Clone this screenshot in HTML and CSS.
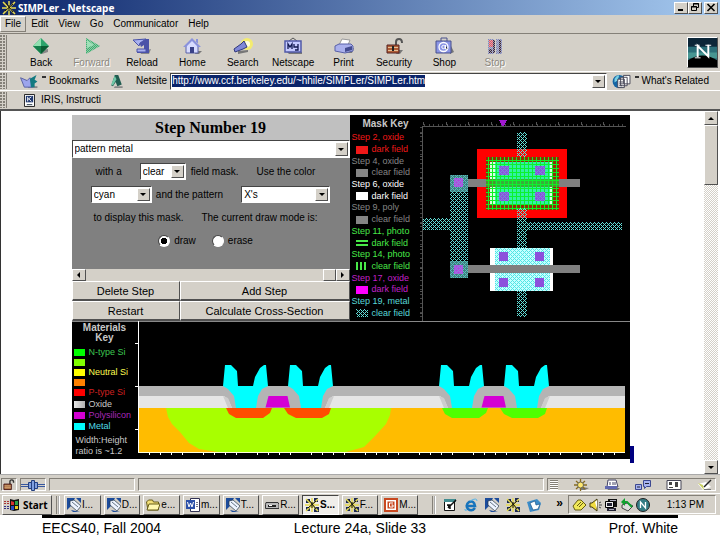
FILE: index.html
```
<!DOCTYPE html>
<html lang="en">
<head>
<meta charset="utf-8">
<title>SIMPLer - Netscape</title>
<link rel="stylesheet" href="styles.css">
</head>
<body>
<svg class="defs" width="0" height="0" aria-hidden="true">
  <defs>
    <pattern id="hatch" width="4" height="4" patternUnits="userSpaceOnUse"><path fill="#62e0da" shape-rendering="crispEdges" d="M0 0h1v1H0zM1 1h1v1H1zM2 2h1v1H2zM3 3h1v1H3zM3 1h1v1H3zM1 3h1v1H1z"/></pattern>
    <pattern id="hatch-light" width="4" height="4" patternUnits="userSpaceOnUse"><path fill="#52e4e4" shape-rendering="crispEdges" d="M0 0h1v1H0zM1 1h1v1H1zM2 2h1v1H2zM3 3h1v1H3zM3 1h1v1H3zM1 3h1v1H1z"/></pattern>
    <pattern id="grid" width="4" height="4" patternUnits="userSpaceOnUse"><path fill="#10f020" shape-rendering="crispEdges" d="M0 0h4v1H0zM0 0h1v4H0z"/></pattern>
    <pattern id="dots" width="2" height="2" patternUnits="userSpaceOnUse"><path fill="#d4d0c8" shape-rendering="crispEdges" d="M0 0h1v1H0zM1 1h1v1H1z"/></pattern>
    <symbol id="chip" viewBox="0 0 14 14"><path fill="#1c2850" d="M1 1h4v4H1zM9 0h4v4H9zM1 9h4v4H1zM9 9h5v5H9z"/><path stroke="#e8dc50" stroke-width="1.5" d="M1 1l12 12M13 1L1 13M7 0v14M0 7h14"/><path stroke="#111" d="M4 2l7 9M3 10l8-7M7 4v6"/></symbol>
    <symbol id="telnet" viewBox="0 0 14 14"><path fill="#1c4c9c" d="M0 0h8L4 8 0 12zM9 0h5v5zM4 12l9 2H6z"/><path fill="#eef4ff" stroke="#234" stroke-width=".7" d="M3 3l4-1 7 6-4 5-7-6z"/><path stroke="#456" stroke-width=".8" d="M5 4l6 5"/></symbol>
    <symbol id="monitor" viewBox="0 0 14 14"><path fill="#111" d="M4 1h9v8H4z"/><path fill="#eee" stroke="#000" d="M1.500 3.500h8v6h-8z"/><path fill="#223" d="M3 5h5v3H3zM3 10h9v3H3z"/><path fill="#aab" d="M6 2h6v1H6zM5 11h5v1H5z"/></symbol>
  </defs>
</svg>

<main class="desktop">
  <header class="titlebar">
    <svg class="i14"><use href="#chip"/></svg>
    <h1>SIMPLer - Netscape</h1>
    <div class="winbtns">
      <button class="bevel" aria-label="Minimize"><svg viewBox="0 0 12 9"><path d="M3 6h5v2H3z"/></svg></button>
      <button class="bevel" aria-label="Restore"><svg viewBox="0 0 12 9"><path fill="none" stroke="#000" d="M4.500 3V.5h5v4H8M2.500 3.500h5v4h-5zM4 1h6M2 4h6"/></svg></button>
      <button class="bevel apart" aria-label="Close"><svg viewBox="0 0 12 9"><path stroke="#000" stroke-width="1.600" d="M2.500 1l7 7M9.500 1l-7 7"/></svg></button>
    </div>
  </header>

  <nav class="menu">
    <button class="open">File</button><button>Edit</button><button>View</button><button>Go</button><button>Communicator</button><button>Help</button>
  </nav>

  <div class="bar tools">
    <span class="grip"></span>
    <div class="toolset">
      <button class="tool"><svg viewBox="0 0 20 18"><path fill="#888" d="M9 13l8-1v3l-6 2z"/><path fill="#2da46c" d="M10 1l8 8-8 8-8-8z"/><path fill="#0c5c34" d="M10 9h8l-8 8z"/><path fill="#8fe0b0" d="M2 9l8-8v8z"/><path fill="#13804b" d="M2 9h8v8z"/></svg>Back</button>
      <button class="tool off"><svg viewBox="0 0 20 18"><path fill="#37b371" d="M4 1l14 8-14 8z"/><path fill="url(#dots)" d="M4 1l14 8-14 8z" opacity=".6"/><path fill="#9fe0b8" d="M5 3l7 5-7 3z"/></svg>Forward</button>
      <button class="tool"><svg viewBox="0 0 20 18"><path fill="#888" d="M8 15l11-3-2 5H9z"/><path fill="#4a52a8" d="M6 2h11v14H5v-4h7V8L9 10z"/><path fill="#aab2f0" stroke="#4a52a8" d="M1 3l6 6 1-3 6-4zM5 12h9v3H5z"/></svg>Reload</button>
      <button class="tool"><svg viewBox="0 0 20 18"><path fill="#777" d="M14 14h6l-3 3h-4z"/><path fill="#d8dcff" stroke="#5a62a8" d="M4 8l6-6 6 6v8H4z"/><path fill="#8a92dc" d="M10 1L1 10h3l6-6 6 6h3zM14 2h2v4h-2z"/><path fill="#3a4288" d="M8 10h4v6H8z"/></svg>Home</button>
      <button class="tool"><svg viewBox="0 0 20 18"><circle cx="14" cy="7" r="6" fill="#f4ec70"/><circle cx="14" cy="7" r="3" fill="#fffde0"/><path fill="#777" d="M5 14l10-1v2L5 17z"/><path fill="#8088d8" stroke="#30387c" d="M1 12l7-5 3-3 3 6-4 2-8 3z"/></svg>Search</button>
      <button class="tool"><svg viewBox="0 0 20 18"><path fill="none" stroke="#555" d="M6 4l4-3 4 3"/><path fill="#777" d="M4 15h15v2H6z"/><path fill="#c4caff" stroke="#505aa8" stroke-width="1.500" d="M2 4h16v11H2z"/><path fill="none" stroke="#101850" stroke-width="1.300" d="M5 12V7l2 3 2-3v5M11 7v3h4M15 7v6h-3"/></svg>Netscape</button>
      <button class="tool"><svg viewBox="0 0 20 18"><path fill="#777" d="M9 14l11-3-2 5h-7z"/><path fill="#fff" stroke="#999" d="M5 8l3-6 8 1-2 5z"/><path fill="#aab0ec" stroke="#5860a8" d="M1 9l4-2h12l2 2v5l-8 2-10-2z"/><path fill="#444c90" d="M11 11l7-2v4l-7 2z"/></svg>Print</button>
      <button class="tool"><svg viewBox="0 0 20 18"><path fill="#777" d="M14 13h5l-3 4h-4z"/><path fill="none" stroke="#555" stroke-width="2" d="M12 9V5q0-3 3-3t3 4"/><path fill="#b05c34" stroke="#522" d="M3 8h12v8H3z"/><path stroke="#e4c098" d="M4 10.500h10M4 13.500h10"/><path fill="#222" d="M8 9h2v5H8z"/></svg>Security</button>
      <button class="tool"><svg viewBox="0 0 20 18"><path fill="#777" d="M16 7l4 8-4 2z"/><path fill="none" stroke="#48508c" d="M7 4V1h6v3"/><path fill="#8a94e4" stroke="#48508c" d="M2 4h15v12H2z"/><circle cx="9.500" cy="10" r="4.500" fill="none" stroke="#fff" stroke-width="1.300"/><circle cx="9.500" cy="10" r="1.700" fill="none" stroke="#fff"/><path stroke="#fff" d="M11.500 8v4h2"/></svg>Shop</button>
      <button class="tool off"><svg viewBox="0 0 20 18"><path fill="#8088c0" d="M3 2h6v15H3zM11 2h6v15h-6z"/><path fill="#e05068" d="M4 3h5v7H4z"/><path fill="#324" d="M8 3h2v13H8zM14 3h2v13h-2zM4 12h3v4H4z"/><path fill="url(#dots)" d="M2 1h16v17H2z" opacity=".7"/></svg>Stop</button>
    </div>
    <svg class="nlogo bevel" viewBox="0 0 30 30"><path fill="#0c2638" d="M0 0h30v30H0z"/><path fill="#2b6e78" d="M0 9h30v14H0z"/><path fill="#5ab0a4" d="M0 15h30v6H0z" opacity=".6"/><path fill="#000" d="M0 23q15-10 30 0v7H0z"/><path fill="none" stroke="#fff" stroke-width="2" d="M10 20V8l11 11V7"/><path stroke="#fff" d="M7 7.500h5M18 7.500h6M7 20.500h6"/></svg>
  </div>

  <div class="bar location">
    <span class="grip"></span>
    <a class="quick marks" href="#bookmarks"><svg viewBox="0 0 20 16"><path fill="#888" d="M9 13h10v2H9z"/><path fill="#9ca4ec" stroke="#5860a0" d="M1 4l7 3 3-3 3 10H5z"/><path fill="#137a80" d="M11 5l7-4-2 5 3 2-3 2v4h-4z"/></svg><i class="tick"></i>Bookmarks</a>
    <svg class="netsite" viewBox="0 0 14 16"><path fill="#888" d="M5 14h9v2H4z"/><path fill="#205c50" d="M5 1h4l4 11-5 2-2-5-3 5-2-1z"/><path fill="#70c8a8" d="M5 2l2 4-4 7-2-1z"/></svg>
    <label for="url">Netsite</label>
    <div class="urlbox">
      <input id="url" type="text" value="http://www.ccf.berkeley.edu/~hhile/SIMPLer/SIMPLer.htm">
      <button class="bevel arrow" aria-label="History"></button>
    </div>
    <a class="quick related" href="#related"><svg viewBox="0 0 20 16"><circle cx="7" cy="8" r="7" fill="#1666a4"/><path fill="#78d0e4" d="M2 5q4-5 5-3L5 7 2 9z"/><path fill="#fff" stroke="#445" d="M11.500 1.500h7v9h-7zM8.500 3.500h7v9h-7zM5.500 5.500h7v9h-7z"/><path stroke="#445" d="M7 8.500h4M7 10.500h4M7 12.500h3"/></svg><i class="tick"></i>What's Related</a>
  </div>

  <div class="bar personal">
    <span class="grip"></span>
    <a class="quick" href="#iris"><svg viewBox="0 0 12 14"><path fill="#fff" stroke="#111" d="M.5.500h11v13H.5z"/><path fill="#223a70" d="M2 2h8v7H2z"/><path stroke="#fff" d="M4 3v5M4 6l4-3M5 5l3 3"/><path stroke="#234" d="M3 11.500h6"/></svg>IRIS, Instructi</a>
  </div>

  <section class="view">
    <div class="page">
      <div class="applet">
        <div class="upper">
          <form class="panel">
            <h2>Step Number 19</h2>
            <div class="drop wide"><select aria-label="Step"><option>pattern metal</option></select><span class="bevel arrow"></span></div>
            <div class="fields">
              <div class="row shift">
                <label for="field">with a</label>
                <div class="drop tone"><select id="field"><option>clear</option></select><span class="bevel arrow"></span></div>
                <span>field mask.</span><label class="later" for="color">Use the color</label>
              </div>
              <div class="row">
                <div class="drop color"><select id="color"><option>cyan</option></select><span class="bevel arrow"></span></div>
                <label for="pat">and the pattern</label>
                <div class="drop pat"><select id="pat"><option>X's</option></select><span class="bevel arrow"></span></div>
              </div>
              <div class="row shift"><span>to display this mask.</span><span class="later">The current draw mode is:</span></div>
              <div class="row shift modes">
                <label><input type="radio" name="mode" checked>draw</label>
                <label><input type="radio" name="mode">erase</label>
              </div>
            </div>
            <div class="hscroll"><button type="button" class="bevel" aria-label="Left"><i class="left"></i></button><span class="hthumb bevel"></span><button type="button" class="bevel" aria-label="Right"><i class="right"></i></button></div>
            <div class="actions">
              <button type="button" class="bevel">Delete Step</button><button type="button" class="bevel">Add Step</button>
              <button type="button" class="bevel">Restart</button><button type="button" class="bevel">Calculate Cross-Section</button>
            </div>
          </form>
          <div class="mask">
            <div class="maskkey">
              <h3>Mask Key</h3>
              <ul>
                <li class="red">Step 2, oxide<span><i></i>dark field</span></li>
                <li class="gray">Step 4, oxide<span><i></i>clear field</span></li>
                <li class="white">Step 6, oxide<span><i></i>dark field</span></li>
                <li class="gray">Step 9, poly<span><i></i>clear field</span></li>
                <li class="green">Step 11, photo<span><i class="lines"></i>dark field</span></li>
                <li class="green">Step 14, photo<span><i class="bars"></i>clear field</span></li>
                <li class="magenta">Step 17, oxide<span><i></i>dark field</span></li>
                <li class="cyan">Step 19, metal<span><svg viewBox="0 0 12 8"><path fill="url(#hatch)" d="M0 0h12v8H0z"/></svg>clear field</span></li>
              </ul>
            </div>
            <svg class="layout" viewBox="420 115 210 206" role="img" aria-label="Mask layout">
              <g shape-rendering="crispEdges">
                <path fill="none" stroke="#555" d="M422.500 126v195M422 126.500h204"/>
                <path fill="none" stroke="#444" stroke-width="2" stroke-dasharray="1 3.500" d="M424 125h202M421 127v194"/>
                <path fill="none" stroke="#555" stroke-width="3" stroke-dasharray="1 21.500" d="M423 123.500h203M420.500 133v188"/>
                <path fill="#a018d0" d="M499 120h8l-3 6h-2z"/>
                <path fill="#f00" d="M477 149h90v69h-90z"/>
                <path fill="#808080" d="M468 179h112v8H468z"/>
                <path fill="#8c3004" d="M486 157h73v53h-73z"/>
                <path fill="#d8ffe0" d="M490 162h63v43h-63z"/>
                <path fill="#48eccc" d="M495 162h55v43h-55z"/>
                <path fill="#509030" d="M486 179h73v8h-73z"/>
                <path fill="url(#grid)" d="M486 157h73v53h-73z"/>
                <path fill="#00f850" d="M495 162h55v43h-55z" opacity=".3"/>
                <path fill="#fff" d="M490 248h63v43h-63z"/>
                <path fill="#c4ffff" d="M495 248h55v43h-55z"/>
                <path fill="url(#hatch-light)" d="M495 248h55v43h-55z"/>
                <path fill="#808080" d="M468 265h112v8H468z"/>
                <path fill="url(#hatch)" d="M517 132h10v25h-10zM517 208h10v40h-10zM517 291h10v26h-10zM450 175h18v103h-18zM423 218h27v12h-27zM527 222h95v8h-95z"/>
                <path fill="#4e9c9c" d="M450 175h18v17h-18zM450 261h18v17h-18z" opacity=".8"/>
                <path fill="#8c50dc" d="M499 166h10v9h-10zM535 166h10v9h-10zM499 192h10v9h-10zM535 192h10v9h-10zM499 252h9v9h-9zM535 252h9v9h-9zM499 278h9v9h-9zM535 278h9v9h-9z"/>
                <path fill="#b048e0" d="M454 178h9v9h-9zM454 265h9v9h-9z"/>
                <path fill="url(#hatch)" opacity=".4" d="M450 175h18v17h-18zM450 261h18v17h-18zM499 166h10v9h-10zM535 166h10v9h-10zM499 192h10v9h-10zM535 192h10v9h-10z"/>
              </g>
            </svg>
          </div>
        </div>
        <div class="lower">
          <div class="matkey">
            <h3>Materials<br>Key</h3>
            <ul>
              <li class="m-n"><i></i>N-type Si</li>
              <li class="m-n2"><i></i></li>
              <li class="m-neutral"><i></i>Neutral Si</li>
              <li class="m-p2"><i></i></li>
              <li class="m-p"><i></i>P-type Si</li>
              <li class="m-ox"><i></i>Oxide</li>
              <li class="m-poly"><i></i>Polysilicon</li>
              <li class="m-metal"><i></i>Metal</li>
            </ul>
            <p>Width:Height<br>ratio is ~1.2</p>
          </div>
          <svg class="section" viewBox="134 321 496 138" role="img" aria-label="Device cross-section">
            <defs>
              <g id="pair">
                <path fill="#b4b4b4" d="M222 387l2 9 4 3 4 9h93l4-9 4-3 1-9z"/>
                <path fill="#cdcdcd" d="M223 396l5 12h4l-4-10zM334 396l-5 12h-4l4-10z"/>
                <path fill="#0ff" id="metal" d="M223 386l2-21h6l6 6 1 15h15l2-9 5-9 4-3h2l2 21-6 3-4 7-2 12h-20l-2-12-6-7z"/>
                <use href="#metal" x="65"/>
                <path fill="#d400d4" d="M268.500 396h19l2.500 11.500h-24.500z"/>
                <path d="M226 408h46l-2 5-7 5h-27l-7-4zM284 408h47l-2 6-7 4h-26l-8-4z"/>
              </g>
            </defs>
            <path fill="#ffbc00" d="M139 408h486v44H139z"/>
            <path fill="#a8ff00" d="M166 408l2 9 4 7 8 8 9 11 10 6 19 3h128l18-5 12-12 10-11 4-9 1-7z"/>
            <path fill="#e6e6e6" d="M139 396h486v12H139z"/>
            <path fill="#b4b4b4" d="M139 386h486v10H139z"/>
            <use href="#pair" fill="#ff4c00"/>
            <use href="#pair" x="216" fill="#50ff00"/>
            <g fill="none" stroke="#fff" shape-rendering="crispEdges">
              <path d="M138.500 321v132M135 343.500h3M135 386.500h3M135 429.500h3"/>
              <path stroke="#ffd" d="M138 452.500h487"/>
              <path stroke-width="2" stroke-dasharray="1 10 1 10 1 10 1 20" d="M149 454h474"/>
            </g>
          </svg>
        </div>
      </div>
      <span class="cursor"></span>
    </div>
    <div class="vscroll"><button class="bevel" aria-label="Up"><i class="up"></i></button><span class="vthumb bevel"></span><button class="bevel last" aria-label="Down"><i class="down"></i></button></div>
  </section>

  <div class="status">
    <span class="well lock"><svg viewBox="0 0 14 13"><path fill="none" stroke="#333" stroke-width="1.500" d="M8 6V3q0-2 2-2t2 3"/><path fill="#a4683c" stroke="#411" d="M1.500 5.500h8v6h-8z"/><path stroke="#dcb080" d="M2 7.500h7M2 9.500h7"/></svg></span>
    <span class="well plug"><svg viewBox="0 0 24 12"><path stroke="#3858a0" fill="none" d="M0 5.500h7M0 7.500h7M17 5.500h7M17 7.500h7"/><path fill="#80a0e0" stroke="#244080" d="M7.500 3.500h3v6h-3zM13.500 3.500h3v6h-3zM10.500 1.500h3v10h-3z"/></svg></span>
    <span class="well short"></span>
    <span class="well long"></span>
    <div class="well components">
      <span class="ridges"></span>
      <button aria-label="Navigator"><svg viewBox="0 0 16 12"><path fill="#777" d="M8 8l8 1-4 2H7z"/><path stroke="#886c20" stroke-width="1.300" d="M1 6h13M7.500 0v12M3 2l9 8M12 2L3 10"/><circle cx="7.500" cy="6" r="3" fill="#ffe870" stroke="#665"/></svg></button>
      <button aria-label="Inbox"><svg viewBox="0 0 16 12"><path fill="#777" d="M3 9h13l-2 2H4z"/><path fill="#fff" stroke="#446" d="M4 1h8l2 7H3z"/><path fill="#6068b0" d="M1 7h12v3H1z"/><path stroke="#446" d="M6 3v3M9 3v3M11 3v3"/></svg></button>
      <button aria-label="Newsgroups"><svg viewBox="0 0 16 12"><path fill="#a8b4f0" stroke="#3c4890" d="M.5 5.500h6v5h-6zM8.500 1.500h7v6h-4l-2 2v-2h-1z"/><path stroke="#223" d="M2 8h3M10 4.500h4"/></svg></button>
      <button aria-label="Address Book"><svg viewBox="0 0 16 12"><path fill="#fff" stroke="#445" d="M1 1.500h14v9H1z"/><path fill="#444" d="M3 3h3v3H3zM9 3h3v5H9zM3 8h4v1H3z"/></svg></button>
      <button aria-label="Composer"><svg viewBox="0 0 16 12"><path fill="#fff" d="M1 5l8-2 5 5-8 3z"/><path fill="#c8d060" d="M1 4l5 2 1 5z"/><path stroke="#222" stroke-width="1.500" d="M7 8l7-7"/><path fill="#777" d="M7 10h7v1H7z"/></svg></button>
    </div>
  </div>

  <footer class="taskbar">
    <button class="bevel start"><svg viewBox="0 0 16 14"><path fill="#111" d="M6 1l4 1 5-1v11l-5 1-4-1z"/><path fill="#d83030" d="M7 3l3 1v3H7z"/><path fill="#28a048" d="M11 3h3v4h-3z"/><path fill="#2848c0" d="M7 8h3v4H7z"/><path fill="#e8c820" d="M11 8h3v3h-3z"/><path stroke="#a33" stroke-dasharray="2 1" d="M0 3.500h6M0 5.500h6"/><path stroke="#338" stroke-dasharray="2 1" d="M0 8.500h6M0 10.500h6"/></svg>Start</button>
    <span class="divider"></span>
    <div class="tasks">
      <button class="bevel"><svg><use href="#telnet"/></svg>I...</button>
      <button class="bevel"><svg><use href="#telnet"/></svg>D...</button>
      <button class="bevel"><svg viewBox="0 0 14 14"><path fill="#f4e078" stroke="#665c18" d="M.5 4l2-2h4l1 2h5v8H2z"/><path fill="#fff8b0" stroke="#665c18" d="M3 6h11l-2 6H1z"/></svg>e...</button>
      <button class="bevel"><svg viewBox="0 0 14 14"><path fill="#fff" stroke="#335" d="M4.500.500h9v13h-9z"/><path fill="#2c50a8" d="M0 2h9v9H0z"/><path fill="none" stroke="#fff" d="M1.500 4l1.500 5 1.500-4L6 9l1.500-5"/><path stroke="#778" d="M10 4.500h2M10 6.500h2M10 8.500h2"/></svg>m...</button>
      <button class="bevel"><svg><use href="#telnet"/></svg>T...</button>
      <button class="bevel"><svg viewBox="0 0 14 14"><path fill="#bbb" stroke="#333" d="M1 4.500h12l1 2v4H.5v-4z"/><path fill="#222" d="M3 7h8v2H3z"/><path fill="#fff" d="M4 7h3v1H4z"/></svg>R...</button>
      <button class="bevel active"><svg><use href="#chip"/></svg>S...</button>
      <button class="bevel"><svg><use href="#chip"/></svg>F...</button>
      <button class="bevel"><svg viewBox="0 0 14 14"><path fill="#c84820" d="M0 0h14v14H0z"/><path fill="#fff" d="M2 2h10v10H2z"/><path fill="#c84820" d="M3.500 3.500h7v7h-7z"/><path fill="none" stroke="#fff" d="M9 5H5.500v4H9V7H7.500"/></svg>M...</button>
    </div>
    <span class="divider far"></span>
    <div class="launch">
      <svg viewBox="0 0 14 14"><path fill="#fff" stroke="#111" d="M1.500 1.500h10v11h-10z"/><path fill="#408c90" d="M1 1h12v3H1z"/><path stroke="#111" stroke-width="1.500" d="M5 10l8-8M4 7h3v4"/></svg>
      <svg viewBox="0 0 14 14"><path fill="none" stroke="#1874bc" stroke-width="2.500" d="M11 10q-3 4-7 1-3-4 1-7 5-2 6 4H4"/><path fill="none" stroke="#58b4e8" d="M1 11Q0 13 3 12M6 3q7-4 7 0"/></svg>
      <svg><use href="#telnet"/></svg>
      <svg><use href="#chip"/></svg>
      <svg viewBox="0 0 14 14"><path fill="#3c8cc8" d="M0 4l10-3 4 4-2 7-9 2z"/><path fill="#fff" stroke="#1c5488" stroke-width=".7" d="M3 5l5-2 1 4 4-1-2 5-5 1z"/></svg>
    </div>
    <b class="more">»</b>
    <div class="well tray">
      <div class="trayicons">
        <svg viewBox="0 0 14 14"><path fill="#f0e858" stroke="#665c10" d="M1 8l5-6h3l5 5-5 5H3z"/><path stroke="#665c10" d="M5 8l4-4M7 9l4-4"/></svg>
        <svg viewBox="0 0 14 14"><path fill="#f0dc40" stroke="#443c10" d="M2 5h2l5-4v12L4 9H2z"/><path fill="#fff" d="M7 4l2-2v9z"/><path fill="none" stroke="#444" d="M11 5l2-1M11 7h3M11 9l2 1"/></svg>
        <svg><use href="#monitor"/></svg>
        <svg viewBox="0 0 14 14"><path fill="#ddd" stroke="#444" d="M2 7l5-2 6 3-5 5-6-3z"/><path fill="none" stroke="#10a030" stroke-width="2" d="M2 4h5l5 5"/><path fill="#10a030" d="M1 4l4-4v8z"/></svg>
        <svg viewBox="0 0 14 14"><circle cx="7" cy="7" r="6.500" fill="#347c84" stroke="#222"/><path fill="none" stroke="#fff" stroke-width="1.300" d="M4.500 10V4l5 6V4"/></svg>
      </div>
      <time>1:13 PM</time>
    </div>
  </footer>

  <div class="slide">
    <span>EECS40, Fall 2004</span><span>Lecture 24a, Slide 33</span><span>Prof. White</span>
  </div>
</main>
</body>
</html>
```
FILE: styles.css
```
* { box-sizing: border-box; }
body {
  margin: 0;
  background: #fff;
  font: 10px/12px "Liberation Sans", Arial, sans-serif;
  color: #000;
}
h1, h2, h3, ul, p { margin: 0; padding: 0; }
ul { list-style: none; }
a { color: inherit; text-decoration: none; }
button, input, select { font: inherit; color: inherit; margin: 0; padding: 0; border: 0; background: none; border-radius: 0; }
svg { display: block; flex: none; }
i { flex: none; }
.defs { position: absolute; }

.bevel {
  background: #d4d0c8;
  border: 1px solid;
  border-color: #fff #505050 #505050 #fff;
}
.well { border: 1px solid; border-color: #848078 #fff #fff #848078; }

.desktop { display: flex; flex-direction: column; min-height: 100vh; }

/* Title bar */
.titlebar {
  display: flex; align-items: center; gap: 2px;
  height: 15px; padding: 0 2px;
  background: linear-gradient(90deg, #0a246a, #a6caf0);
}
.i14 { width: 14px; height: 14px; }
.titlebar h1 { flex: 1; color: #fff; font: bold 10px/14px "Noto Sans", sans-serif; }
.winbtns { display: flex; }
.winbtns button { width: 14px; height: 12px; }
.winbtns .apart { margin-left: 2px; }
.winbtns svg { width: 12px; height: 9px; }

/* Menu */
.menu { display: flex; height: 18px; padding: 1px 0; background: #d4d0c8; }
.menu button { height: 16px; padding: 0 5px; }
.menu .open { padding: 0 4px; border: 1px solid; border-color: #fff #848078 #848078 #fff; }

/* Toolbars */
.bar {
  display: flex; align-items: center;
  background: #d4d0c8;
  border-top: 1px solid #848078;
  border-bottom: 1px solid #fff;
}
.grip {
  width: 7px; align-self: stretch; margin: 1px 0; flex: none;
  border-right: 1px solid #848078;
  background: radial-gradient(circle at 1px 1px, #848078 1px, transparent 1px) 0 0 / 3px 3px, #d4d0c8;
}
.tools { height: 39px; }
.toolset { display: grid; grid-template-columns: repeat(10, 1fr); flex: 0 1 513px; padding-left: 9px; }
.tool { display: flex; flex-direction: column; align-items: center; line-height: 11px; gap: 2px; }
.tool svg { width: 20px; height: 18px; }
.tool.off { color: #8c8880; text-shadow: 1px 1px #fff; }
.nlogo { width: 31px; height: 31px; margin: 0 2px 0 auto; }
.location { height: 19px; border-top: 0; }
.quick { display: flex; align-items: center; gap: 3px; white-space: nowrap; }
.quick svg { width: 20px; height: 15px; }
.tick { width: 4px; height: 2px; margin-bottom: 8px; background: #333; }
.marks { margin-left: 12px; }
.netsite { width: 13px; height: 14px; margin: 0 13px 0 11px; }
.urlbox {
  display: flex; flex: 1; height: 17px; margin: 0 5px 0 3px; padding: 1px; min-width: 0;
  background: #fff; border: 1px solid; border-color: #444 #fff #fff #444;
}
.urlbox input { field-sizing: content; height: 12px; align-self: center; background: #0a246a; color: #fff; outline: 0; }
.urlbox .arrow { margin-left: auto; }
.related { padding-right: 11px; }
.arrow { display: flex; align-items: center; justify-content: center; width: 13px; flex: none; }
.arrow::after, .up, .down { content: ""; border: 3px solid transparent; border-top-color: #000; border-bottom: 0; }
.up { border-bottom: 3px solid #000; border-top: 0; }
.personal { height: 20px; border-top: 0; border-bottom: 2px solid #555; }
.personal .quick { margin-left: 17px; gap: 6px; }
.personal svg { width: 11px; height: 13px; }

/* Browser viewport */
.view { display: flex; flex: 1; border-left: 1px solid #333; }
.page { position: relative; flex: 1; padding: 4px 12px 14px 8px; }
.cursor { position: absolute; left: calc(50% + 277px); bottom: 11px; width: 4px; height: 17px; background: #000080; }
.vscroll {
  display: flex; flex-direction: column; width: 14px; margin-right: 2px;
  background: repeating-conic-gradient(#fff 0 25%, #d4d0c8 0 50%) 0 0 / 2px 2px;
}
.vscroll button { display: flex; height: 14px; align-items: center; justify-content: center; }
.vthumb { height: 60px; }
.vscroll .last { margin-top: auto; }

/* Applet */
.applet { max-width: 558px; margin: 0 auto; background: #000; }
.upper { display: grid; grid-template-columns: 278fr 280fr; }
.panel { display: flex; flex-direction: column; background: #808080; }
.panel h2 { height: 25px; background: #c0c0c0; text-align: center; font: bold 16px/25px "Liberation Serif", serif; }
.drop { position: relative; display: flex; height: 17px; background: #fff; border: 1px solid; border-color: #444 #fff #fff #444; }
.drop select { appearance: none; width: 100%; padding: 0 2px; outline: 0; }
.drop .arrow { position: absolute; right: 1px; top: 1px; bottom: 1px; pointer-events: none; }
.drop.wide { height: 18px; }
.drop.tone { width: 46px; margin: 0 5px 0 18px; }
.drop.color { width: 61px; margin-right: 4px; }
.drop.pat { width: 89px; margin-left: 18px; }
.fields { flex: 1; padding-top: 2px; white-space: nowrap; }
.row { display: flex; align-items: center; justify-content: center; height: 23px; }
.shift { padding-right: 10px; }
.later { margin-left: 18px; }
.modes { gap: 16px; }
.modes label { display: flex; align-items: center; gap: 4px; }
.modes input {
  appearance: none; width: 12px; height: 12px; border-radius: 50%;
  background: #fff; border: 1px solid; border-color: #444 #fff #fff #444;
}
.modes input:checked { background: radial-gradient(circle, #000 0 3px, #fff 3px); }
.hscroll { display: flex; height: 12px; background: #d4d0c8; }
.hscroll button { display: flex; width: 14px; align-items: center; justify-content: center; }
.hthumb { width: 13px; margin-left: auto; }
.left, .right { border: 3px solid transparent; }
.left { border-right: 3px solid #000; border-left: 0; }
.right { border-left: 3px solid #000; border-right: 0; }
.actions { display: grid; grid-template-columns: 108fr 170fr; }
.actions button { height: 20px; font-size: 11px; border-bottom-width: 2px; }

.mask { display: grid; grid-template-columns: 70fr 210fr; }
.maskkey { display: flex; flex-direction: column; padding: 2px 0 2px 2px; font-size: 9px; line-height: 11px; white-space: nowrap; }
h3 { color: #c8c8c8; font: bold 10px/13px "Liberation Sans", Arial, sans-serif; text-align: center; }
.maskkey ul { flex: 1; display: grid; grid-template-rows: repeat(8, 1fr); padding-top: 2px; }
.maskkey li { display: flex; flex-direction: column; justify-content: space-around; }
.maskkey span { display: flex; align-items: center; gap: 4px; padding-left: 4px; }
.maskkey i, .maskkey svg { width: 12px; height: 8px; background: currentColor; }
.maskkey svg { background: none; }
.maskkey .lines { background: linear-gradient(transparent 1px, currentColor 1px 3px, transparent 3px 5px, currentColor 5px 7px, transparent 7px); }
.maskkey .bars { background: repeating-linear-gradient(90deg, currentColor 0 2px, transparent 2px 4px); }
.red { color: #f01818; }
.gray { color: #858585; }
.white { color: #fff; }
.green { color: #48e848; }
.magenta { color: #c020c8; }
.magenta i { background: #f0f; }
.cyan { color: #58d8d8; }
.layout, .section { width: 100%; height: auto; }

.lower { display: grid; grid-template-columns: 62fr 496fr; box-shadow: inset 0 1px #888; }
.matkey { display: flex; flex-direction: column; font-size: 9px; line-height: 11px; white-space: nowrap; color: #c8c8c8; }
.matkey h3 { line-height: 10px; padding: 2px 0 4px 4px; }
.matkey ul { padding-left: 2px; }
.matkey li { display: flex; align-items: center; gap: 4px; height: 10px; }
.matkey li:nth-child(n+6) { height: 11px; }
.matkey .m-ox { margin-top: 2px; }
.matkey i { width: 11px; height: 7px; }
.matkey p { padding: 3px 0 0 4px; }
.m-n { color: #3cc850; } .m-n i { background: #0f0; }
.m-n2 i { background: #80ff00; }
.m-neutral { color: #ffff50; } .m-neutral i { background: #ff0; }
.m-p2 i { background: #ff8000; }
.m-p { color: #d02020; } .m-p i { background: #f00; }
.m-ox i { background: linear-gradient(90deg, #e6e6e6, #b0b0b0); }
.m-poly { color: #a828b8; } .m-poly i { background: #d400d4; }
.m-metal { color: #50dce8; } .m-metal i { background: #0ff; }

/* Status bar */
.status { display: flex; gap: 3px; height: 19px; padding: 3px 4px 2px 1px; background: #d4d0c8; border-top: 1px solid #aaa; }
.status .well { display: flex; align-items: center; justify-content: center; }
.lock { flex: 0 0 15px; }
.lock svg { width: 14px; height: 12px; }
.plug { flex: 0 0 26px; }
.plug svg { width: 24px; height: 12px; }
.short { flex: 85; }
.long { flex: 409; }
.components { flex: 0 0 169px; gap: 15px; }
.components button { display: flex; }
.components svg { width: 16px; height: 12px; }
.ridges { width: 8px; height: 10px; background: repeating-linear-gradient(#848078 0 1px, #fff 1px 2px); }

/* Taskbar */
.taskbar { display: flex; align-items: center; height: 22px; padding: 0 4px 0 2px; background: #d4d0c8; border-top: 1px solid #fff; }
.taskbar svg { width: 14px; height: 14px; }
.start { display: flex; align-items: center; gap: 3px; width: 50px; height: 20px; padding: 0 1px; font: bold 10px/14px "Noto Sans", sans-serif; }
.start svg { width: 16px; }
.divider { width: 4px; height: 18px; margin: 0 4px; border-left: 1px solid #848078; border-right: 2px groove #fff; }
.tasks { display: grid; grid-template-columns: repeat(9, 1fr); gap: 3px; flex: 0 1 354px; }
.tasks button { display: flex; align-items: center; gap: 1px; min-width: 0; height: 20px; padding: 0 2px; overflow: hidden; white-space: nowrap; }
.tasks .active { border-color: #444 #fff #fff #444; background: #f0eeea; font-weight: bold; }
.far { margin: 0 7px 0 14px; }
.launch { display: flex; gap: 7px; }
.more { margin: 0 5px 4px auto; font-size: 12px; }
.tray { display: flex; align-items: center; justify-content: space-between; width: 148px; height: 19px; padding: 0 11px 0 3px; }
.trayicons { display: flex; gap: 2px; }

/* Slide footer */
.slide {
  display: grid; grid-template-columns: 1fr auto 1fr;
  margin: 0 42px; padding: 3px 0 5px;
  border-top: 3px solid #000;
  font-size: 14px; line-height: 14px;
}
.slide span:last-child { text-align: right; }
```
